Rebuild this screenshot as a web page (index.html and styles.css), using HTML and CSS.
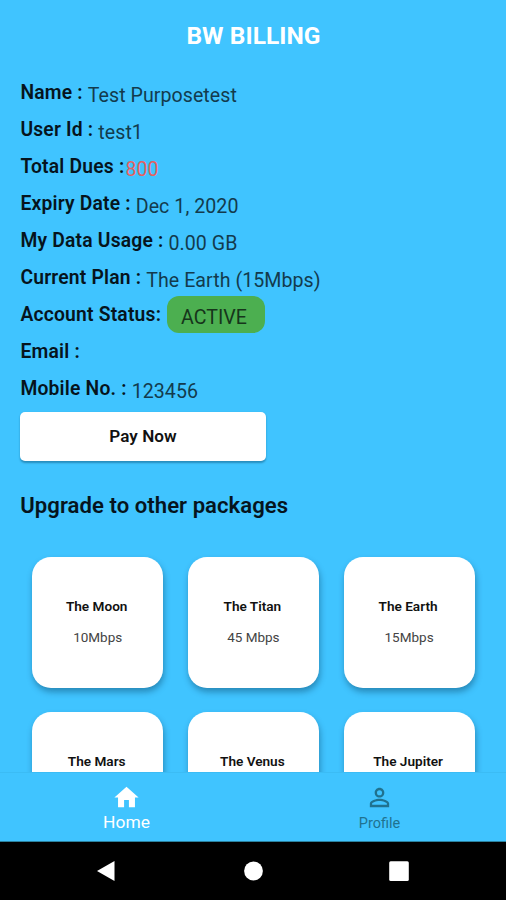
FILE: index.html
```html
<!DOCTYPE html>
<html lang="en">
<head>
<meta charset="utf-8">
<title>BW Billing</title>
<link rel="stylesheet" href="styles.css">
</head>
<body>
<div class="app">
  <header class="title"><span>BW BILLING</span></header>
  <main class="content">
    <dl class="details">
      <div class="row"><dt>Name :</dt><dd>Test Purposetest</dd></div>
      <div class="row"><dt>User Id :</dt><dd>test1</dd></div>
      <div class="row tight"><dt>Total Dues :</dt><dd class="due">800</dd></div>
      <div class="row"><dt>Expiry Date :</dt><dd>Dec 1, 2020</dd></div>
      <div class="row"><dt>My Data Usage :</dt><dd>0.00 GB</dd></div>
      <div class="row"><dt>Current Plan :</dt><dd>The Earth (15Mbps)</dd></div>
      <div class="row"><dt>Account Status:</dt><dd class="pill">ACTIVE</dd></div>
      <div class="row"><dt>Email :</dt><dd></dd></div>
      <div class="row"><dt>Mobile No. :</dt><dd>123456</dd></div>
    </dl>
    <button class="pay">Pay Now</button>
    <h2 class="heading"><span>Upgrade to other packages</span></h2>
    <div class="grid">
      <div class="card"><b>The Moon</b><span>10Mbps</span></div>
      <div class="card"><b>The Titan</b><span>45 Mbps</span></div>
      <div class="card"><b>The Earth</b><span>15Mbps</span></div>
      <div class="card"><b>The Mars</b></div>
      <div class="card"><b>The Venus</b></div>
      <div class="card"><b>The Jupiter</b></div>
    </div>
  </main>
  <nav class="tabs">
    <div class="tab active">
      <svg class="icon" viewBox="0 0 24 24"><path d="M10 20v-6h4v6h5v-8h3L12 3 2 12h3v8z"/></svg>
      <span>Home</span>
    </div>
    <div class="tab">
      <svg class="icon" viewBox="0 0 24 24"><path d="M12 5.9a2.1 2.1 0 1 1 0 4.2 2.1 2.1 0 0 1 0-4.2m0 9c2.97 0 6.1 1.46 6.1 2.1v1.1H5.9V17c0-.64 3.13-2.1 6.1-2.1M12 4C9.79 4 8 5.79 8 8s1.79 4 4 4 4-1.79 4-4-1.79-4-4-4zm0 9c-2.67 0-8 1.34-8 4v3h16v-3c0-2.66-5.33-4-8-4z"/></svg>
      <span>Profile</span>
    </div>
  </nav>
  <footer class="system">
    <svg viewBox="0 0 20 22"><path d="M1 11 18.5 1v20z"/></svg>
    <svg viewBox="0 0 20 22"><circle cx="10.5" cy="11" r="9.4"/></svg>
    <svg viewBox="0 0 20 22"><rect x=".2" y="1.3" width="19.6" height="19.6" rx="1.5"/></svg>
  </footer>
</div>
</body>
</html>
```

FILE: styles.css
```css
* { box-sizing: border-box; }
body { margin: 0; font-family: Roboto, "Liberation Sans", sans-serif; color: #06141d; background: #40c4ff; }
.app { display: flex; flex-direction: column; height: 900px; overflow: hidden; }
.title { flex: none; height: 74px; padding: 22px 0 0 1px; text-align: center; font-size: 24.5px; line-height: 28px; font-weight: 700; color: #fff; letter-spacing: .05px; }
.content { flex: none; height: 698px; padding: 0 20px; overflow: hidden; }
.details { margin: 0; }
.row { display: flex; height: 37px; gap: 5px; }
.row.tight { gap: 1px; }
.row dt { padding: 7px 0 0 .4px; font-size: 19.3px; line-height: 23px; font-weight: 600; letter-spacing: .2px; white-space: nowrap; }
.row dd { margin: 0; padding-top: 10px; font-size: 19.6px; line-height: 24px; letter-spacing: .05px; color: #133b4d; white-space: nowrap; }
.row .due { color: #e5605f; }
.row .pill { height: 36.5px; width: 98px; margin-left: 1px; color: #16351b; background: #4caf50; border-radius: 12px; padding-left: 14px; letter-spacing: 0; }
.pay { display: block; width: 246px; height: 49.5px; margin-top: 4.5px; padding: 0; border: 0; border-radius: 5px; background: #fff; font: 600 17.1px/49px Roboto, sans-serif; letter-spacing: .05px; color: #111; box-shadow: 0 1.5px 2px rgba(0,60,90,.4); }
.heading { margin: 30px 0 0 .3px; font-size: 22.1px; line-height: 28px; font-weight: 600; letter-spacing: .05px; }
.grid { display: grid; grid-template-columns: repeat(3, 131px); gap: 24.7px; margin: 37.5px 0 0 12.2px; }
.card { display: flex; flex-direction: column; align-items: center; height: 131px; padding: 41px 2px 0 0; border-radius: 19px; background: #fff; box-shadow: 1px 4px 6px rgba(0,50,80,.4); white-space: nowrap; }
.card b { font-size: 13.6px; line-height: 16px; font-weight: 600; letter-spacing: 0; color: #111; }
.card span { margin: 15px 0 0 2px; font-size: 13.5px; line-height: 16px; color: #444; }
.tabs { flex: none; display: flex; height: 70px; border-top: 1px solid #3bbcf5; border-bottom: 1px solid #2b829f; }
.tab { flex: 1; display: flex; flex-direction: column; align-items: center; padding-top: 10px; font-size: 14.5px; line-height: 20px; color: #20728f; }
.tab + .tab span { top: 2px; }
.tab.active { color: #fff; font-size: 17.4px; }
.icon { width: 29px; height: 29px; fill: currentColor; }
.tab span { position: relative; }
.system { flex: none; display: flex; justify-content: space-between; height: 58px; padding: 18px 97px 0 96px; background: #000; }
.system svg { width: 20px; height: 22px; fill: #fff; }
```
